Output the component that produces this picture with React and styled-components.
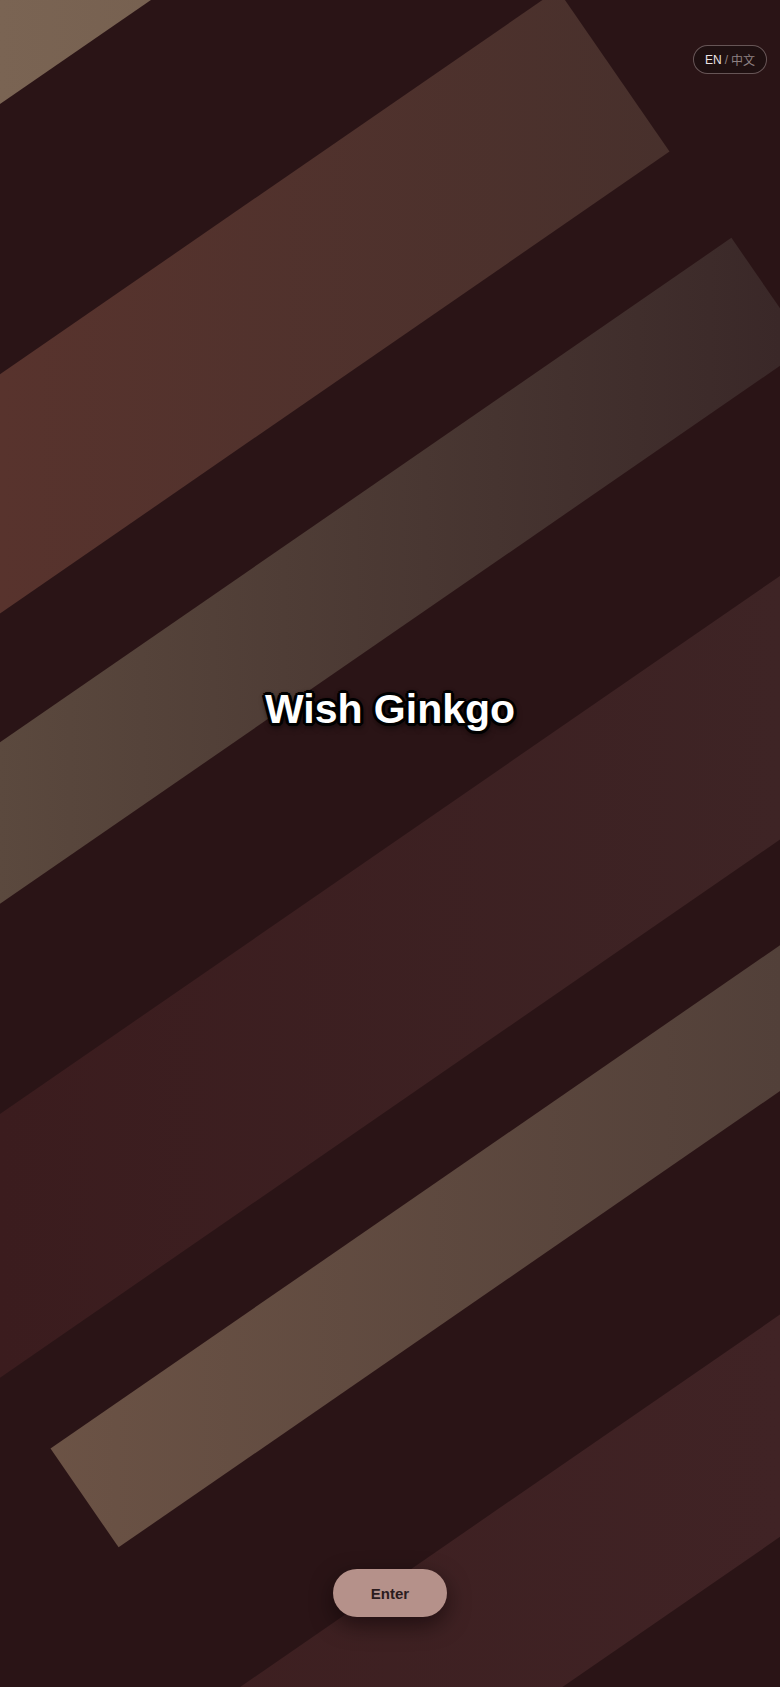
import React from "react";
import styled, { createGlobalStyle } from "styled-components";

const GlobalStyle = createGlobalStyle`
  html, body, #root { margin: 0; padding: 0; height: 100%; }
  body {
    background: #2a1416;
    font-family: "Liberation Sans", Arial, sans-serif;
    overflow: hidden;
  }
  * { box-sizing: border-box; }
`;

const Page = styled.main`
  position: relative;
  height: 100vh;
  display: flex;
  flex-direction: column;
  background: #2a1416;
  overflow: hidden;
`;

const Backdrop = styled.svg`
  position: absolute;
  inset: 0;
  width: 100%;
  height: 100%;
  z-index: 0;
`;

const LangToggle = styled.button`
  position: absolute;
  top: 45px;
  right: 13px;
  z-index: 2;
  height: 29px;
  padding: 0 11px;
  display: flex;
  align-items: center;
  gap: 3px;
  border-radius: 999px;
  border: 1px solid rgba(220, 200, 200, 0.38);
  background: rgba(22, 12, 14, 0.55);
  font-family: "Liberation Sans", "Noto Sans CJK SC", sans-serif;
  font-size: 12px;
  cursor: pointer;
`;

const Lang = styled.span`
  color: ${(p) => (p.$active ? "#ebe3e3" : "#8f8283")};
`;

const Hero = styled.section`
  position: relative;
  z-index: 1;
  flex: 1;
  display: flex;
  align-items: center;
  justify-content: center;
  padding-bottom: 151px;
`;

const Title = styled.h1`
  margin: 0;
  font-family: "Liberation Sans", Arial, sans-serif;
  font-weight: 700;
  font-size: 41px;
  line-height: 46px;
  color: #ffffff;
  letter-spacing: 0;
  text-shadow:
    3px 0 0 #000, -3px 0 0 #000, 0 3px 0 #000, 0 -3px 0 #000,
    2px 2px 0 #000, -2px -2px 0 #000, 2px -2px 0 #000, -2px 2px 0 #000,
    3px 1px 0 #000, -3px 1px 0 #000, 1px 3px 0 #000, -1px 3px 0 #000,
    0 0 5px #000, 1px 4px 7px rgba(0, 0, 0, 0.7);
`;

const Footer = styled.footer`
  position: relative;
  z-index: 1;
  display: flex;
  justify-content: center;
  padding-bottom: 70px;
`;

const EnterButton = styled.button`
  height: 48px;
  padding: 0 38px;
  border: none;
  border-radius: 24px;
  background: #b5918a;
  color: #2b1c1e;
  font-family: "Liberation Sans", Arial, sans-serif;
  font-weight: 700;
  font-size: 15px;
  cursor: pointer;
  box-shadow: 0 8px 22px rgba(10, 2, 4, 0.55);
`;

const bands = [
  { id: "a", c1: -120, c2: 85.7, a1: -2000, a2: 2000, from: "#7a6453", to: "#6a5446" },
  { id: "b", c1: 308, c2: 505, a1: -2000, a2: 465, from: "#58332d", to: "#45302c" },
  { id: "c", c1: 611, c2: 744, a1: -2000, a2: 467, from: "#5b493e", to: "#3a2828" },
  { id: "d", c1: 917, c2: 1134, a1: -2000, a2: 2000, from: "#3b1c1e", to: "#3e2425" },
  { id: "e", c1: 1221, c2: 1341, a1: -781, a2: 2000, from: "#6d5446", to: "#524039" },
  { id: "f", c1: 1525, c2: 1708, a1: -2000, a2: 2000, from: "#3c1e1f", to: "#402325" },
];

function Stripes() {
  return (
    <Backdrop viewBox="0 0 780 1687" preserveAspectRatio="xMidYMid slice" aria-hidden="true">
      <defs>
        {bands.map((b) => (
          <linearGradient key={b.id} id={`g-${b.id}`} gradientUnits="userSpaceOnUse" x1="0" y1="0" x2="780" y2="0">
            <stop offset="0" stopColor={b.from} />
            <stop offset="1" stopColor={b.to} />
          </linearGradient>
        ))}
      </defs>
      <rect x="0" y="0" width="780" height="1687" fill="#2a1416" />
      {bands.map((b) => {
        const t = (34.6 * Math.PI) / 180;
        const cos = Math.cos(t);
        const sin = Math.sin(t);
        const pt = (a, c) => [a * cos + c * sin, -a * sin + c * cos];
        const pts = [pt(b.a1, b.c1), pt(b.a2, b.c1), pt(b.a2, b.c2), pt(b.a1, b.c2)]
          .map((p) => p.map((v) => v.toFixed(1)).join(","))
          .join(" ");
        return <polygon key={b.id} points={pts} fill={`url(#g-${b.id})`} />;
      })}
    </Backdrop>
  );
}

export default function App() {
  return (
    <>
      <GlobalStyle />
      <Page>
        <Stripes />
        <LangToggle type="button">
          <Lang $active>EN</Lang>
          <Lang>/</Lang>
          <Lang>中文</Lang>
        </LangToggle>
        <Hero>
          <Title>Wish Ginkgo</Title>
        </Hero>
        <Footer>
          <EnterButton type="button">Enter</EnterButton>
        </Footer>
      </Page>
    </>
  );
}
